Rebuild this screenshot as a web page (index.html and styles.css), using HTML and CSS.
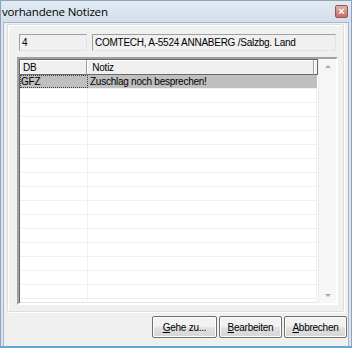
FILE: index.html
```
<html>
<head>
<title>vorhandene Notizen</title>
<link rel="stylesheet" href="styles.css">
</head>
<body>
  <div class="window">
    <div class="titlebar">
      <span class="title">vorhandene Notizen</span>
      <span class="close">&times;</span>
    </div>
    <div class="client">
      <div class="group">
        <div class="fields">
          <div class="field field-id">4</div>
          <div class="field field-name">COMTECH, A-5524 ANNABERG /Salzbg. Land</div>
        </div>
        <div class="list">
          <div class="list-main">
            <div class="list-head">
              <div class="hcol col-db">DB</div>
              <div class="hcol col-notiz">Notiz</div>
              <div class="hcol col-rest"></div>
            </div>
            <div class="rows">
              <div class="row selected"><div class="cell col-db focus">GFZ</div><div class="cell col-notiz">Zuschlag noch besprechen!</div></div>
              <div class="row"><div class="cell col-db"></div><div class="cell col-notiz"></div></div>
              <div class="row"><div class="cell col-db"></div><div class="cell col-notiz"></div></div>
              <div class="row"><div class="cell col-db"></div><div class="cell col-notiz"></div></div>
              <div class="row"><div class="cell col-db"></div><div class="cell col-notiz"></div></div>
              <div class="row"><div class="cell col-db"></div><div class="cell col-notiz"></div></div>
              <div class="row"><div class="cell col-db"></div><div class="cell col-notiz"></div></div>
              <div class="row"><div class="cell col-db"></div><div class="cell col-notiz"></div></div>
              <div class="row"><div class="cell col-db"></div><div class="cell col-notiz"></div></div>
              <div class="row"><div class="cell col-db"></div><div class="cell col-notiz"></div></div>
              <div class="row"><div class="cell col-db"></div><div class="cell col-notiz"></div></div>
              <div class="row"><div class="cell col-db"></div><div class="cell col-notiz"></div></div>
              <div class="row"><div class="cell col-db"></div><div class="cell col-notiz"></div></div>
              <div class="row"><div class="cell col-db"></div><div class="cell col-notiz"></div></div>
              <div class="row"><div class="cell col-db"></div><div class="cell col-notiz"></div></div>
              <div class="row"><div class="cell col-db"></div><div class="cell col-notiz"></div></div>
              <div class="row"><div class="cell col-db"></div><div class="cell col-notiz"></div></div>
            </div>
          </div>
          <div class="scrollbar">
            <span class="arrow arrow-up"></span>
            <span class="arrow arrow-down"></span>
          </div>
        </div>
      </div>
      <div class="buttons">
        <div class="btn btn-goto"><u>G</u>ehe zu...</div>
        <div class="btn btn-edit"><u>B</u>earbeiten</div>
        <div class="btn btn-cancel"><u>A</u>bbrechen</div>
      </div>
    </div>
  </div>
</body>
</html>
```
FILE: styles.css
```
html,body { margin: 0; padding: 0; background: #fff; font-family: "Liberation Sans", Arial, sans-serif; font-size: 10px; letter-spacing: -0.25px; color: #000; }

.window { width: 352px; height: 348px; box-sizing: border-box; display: flex; flex-direction: column; background: #d9e4ef; border: 1px solid #8ea3ba; border-bottom: 2px solid #5ea8d6; }
.titlebar { height: 21px; display: flex; align-items: center; justify-content: space-between; padding: 0 2px 0 1px; background: linear-gradient(#e2eaf3, #d3dfeb); }
.title { font-family: "Open Sans", "Noto Sans", sans-serif; font-size: 11.5px; letter-spacing: -0.2px; }
.close { width: 11px; height: 11px; margin-right: 1px; border: 1px solid #8e5a52; border-radius: 2px; background: linear-gradient(#e3b0a6, #c36f64); color: #fff; font-size: 11px; line-height: 10px; text-align: center; font-weight: bold; letter-spacing: 0; }

.client { flex: 1; margin: 0 2px 0 2px; border: 1px solid #a9b6c4; border-bottom: none; background: #f0f0f0; display: flex; flex-direction: column; }
.group { margin: 1px 4px 0 3px; height: 288px; box-sizing: border-box; border: 1px solid #d5dfe5; border-radius: 2px; box-shadow: inset 1px 1px #fff, 1px 1px #fff; padding: 9px 3px 0 9px; display: flex; flex-direction: column; }

.fields { display: flex; gap: 5px; margin: 0 2px 0 2px; }
.field { height: 17px; box-sizing: border-box; border: 1px solid #e3e3e3; border-top-color: #a0a0a0; border-left-color: #a0a0a0; padding: 2px 0 0 2px; white-space: nowrap; overflow: hidden; }
.field-id { width: 68px; }
.field-name { width: 244px; }

.list { margin-top: 6px; width: 321px; height: 248px; box-sizing: border-box; background: #fff; border: 2px solid; border-color: #a0a0a0 #fff #fff #a0a0a0; box-shadow: inset 1px 1px #696969, inset -1px -1px #e3e3e3; display: flex; overflow: hidden; }
.list-main { flex: 1; overflow: hidden; padding: 1px 0 0 1px; }
.list-head { display: flex; height: 15px; }
.hcol { box-sizing: border-box; height: 15px; background: #f0f0f0; border-right: 1px solid #a0a0a0; border-bottom: 1px solid #696969; box-shadow: inset 1px 1px #fff; padding: 2px 0 0 3px; }
.hcol.col-db { width: 68px; }
.hcol.col-notiz { width: 229px; padding-left: 5px; }
.hcol.col-rest { width: 4px; border-right-color: #696969; }

.row { display: flex; height: 14px; box-sizing: border-box; border-bottom: 1px solid #f0f0f0; }
.cell { box-sizing: border-box; height: 13px; border-right: 1px solid #f0f0f0; padding: 0 0 0 1px; line-height: 13px; white-space: nowrap; }
.cell.col-db { width: 68px; }
.cell.col-notiz { width: 229px; padding-left: 2px; }
.row.selected .cell { background: #bfbfbf; border-right-color: #bfbfbf; }
.cell.focus { outline: 1px dotted #404040; outline-offset: -1px; }

.scrollbar { width: 17px; background: #f6f6f6; border-left: 1px solid #ededed; display: flex; flex-direction: column; justify-content: space-between; align-items: center; padding: 6px 0 6px 0; }
.arrow { width: 0; height: 0; border-left: 3px solid transparent; border-right: 3px solid transparent; }
.arrow-up { border-bottom: 3px solid #a8a8a8; }
.arrow-down { border-top: 3px solid #a8a8a8; }

.buttons { display: flex; justify-content: flex-end; gap: 2px; margin: 4px 1px 0 0; }
.btn { height: 22px; box-sizing: border-box; border: 1px solid #707070; border-radius: 2px; background: linear-gradient(#f2f2f2 45%, #e0e0e0 55%, #d6d6d6); box-shadow: inset 0 0 0 1px #fcfcfc; display: flex; align-items: center; justify-content: center; }
.btn-goto { width: 65px; }
.btn-edit { width: 63px; }
.btn-cancel { width: 63px; }
```
